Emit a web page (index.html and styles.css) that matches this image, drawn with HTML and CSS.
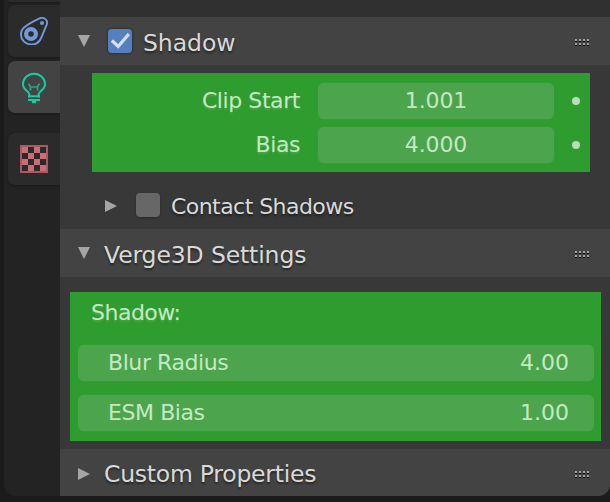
FILE: index.html
```html
<!DOCTYPE html>
<html lang="en">
<head>
<meta charset="utf-8">
<title>Light properties</title>
<link rel="stylesheet" href="styles.css">
</head>
<body>
<svg class="defs" width="0" height="0">
  <symbol id="grip" viewBox="0 0 15 8">
    <path fill="#080808" d="M0 2h2v1H0zM4 2h2v1H4zM8 2h2v1H8zM12 2h2v1h-2zM0 6h2v1H0zM4 6h2v1H4zM8 6h2v1H8zM12 6h2v1h-2z"/>
    <path fill="#a2a2a2" d="M0 0h2v2H0zM4 0h2v2H4zM8 0h2v2H8zM12 0h2v2h-2zM0 4h2v2H0zM4 4h2v2H4zM8 4h2v2H8zM12 4h2v2h-2z"/>
  </symbol>
  <symbol id="down" viewBox="0 0 12 12"><path fill="#a5a5a5" d="M0 0h12L6 12z"/></symbol>
  <symbol id="right" viewBox="0 0 12 12"><path fill="#a5a5a5" d="M0 0l12 6L0 12z"/></symbol>
</svg>
<div class="app">
  <nav class="tabs">
    <div class="tab tab-cut"></div>
    <div class="tab">
      <svg width="28" height="28" viewBox="0 0 28 28" fill="none" stroke="#7199d6">
        <path stroke-width="1.9" d="M2.3 12.6C4.5 9 14 4 19.5 1.4C23.5 -.3 28.4 2.5 26.8 7.4L20.9 21.5C18.8 25.8 15.2 27.7 11 27.5C5.3 27.2 .9 22.8 1 17.6C1 15.6 1.5 13.9 2.3 12.6z"/>
        <circle cx="11" cy="17" r="4.9" stroke-width="4.2"/>
        <circle cx="22" cy="6" r="2.1" fill="#7199d6" stroke="none"/>
      </svg>
    </div>
    <div class="tab active">
      <svg width="28" height="32" viewBox="0 0 28 32" fill="none" stroke="#13cf9f" stroke-width="2">
        <path d="M8 25.4H9.4V23.2C9.4 20.6 3 18.6 3 13.4A11 10.7 0 0 1 25 13.4C25 18.6 18.6 20.6 18.6 23.2V25.4H20"/>
        <path d="M8 25.2h12M8 28.9h12M12 31h4"/>
        <path stroke-width="1.7" opacity=".75" d="M8.5 12.6l2 3.3V19.6M19.5 12.6l-2 3.3V19.6M10.5 16h7"/>
      </svg>
    </div>
    <div class="tab texture">
      <svg width="28" height="28" viewBox="0 0 28 28">
        <path fill="#cc6d75" d="M2 2h6v6H2zM14 2h6v6h-6zM8 8h6v6H8zM20 8h6v6h-6zM2 14h6v6H2zM14 14h6v6h-6zM8 20h6v6H8zM20 20h6v6h-6z"/>
        <path fill="none" stroke="#a75a61" stroke-width="2" d="M1 1h26v26H1z"/>
      </svg>
    </div>
  </nav>
  <main class="panels">
    <header class="head">
      <svg class="arrow" width="12" height="12"><use href="#down"/></svg>
      <span class="check on"><svg width="24" height="24" viewBox="0 0 24 24"><path fill="none" stroke="#d5def0" stroke-width="3.2" d="M3.9 11.5l6.3 6L20.8 5"/></svg></span>
      <span class="title shadow-title">Shadow</span>
      <svg class="grip" width="15" height="8"><use href="#grip"/></svg>
    </header>
    <section class="body shadow-body">
      <div class="green props">
        <div class="prop"><span class="label">Clip Start</span><span class="field">1.001</span><i class="dot"></i></div>
        <div class="prop"><span class="label">Bias</span><span class="field">4.000</span><i class="dot"></i></div>
      </div>
      <div class="sub">
        <svg class="arrow" width="12" height="12"><use href="#right"/></svg>
        <span class="check"></span>
        <span class="label">Contact Shadows</span>
      </div>
    </section>
    <header class="head">
      <svg class="arrow" width="12" height="12"><use href="#down"/></svg>
      <span class="title">Verge3D Settings</span>
      <svg class="grip" width="15" height="8"><use href="#grip"/></svg>
    </header>
    <section class="body verge-body">
      <div class="green verge">
        <div class="caption">Shadow:</div>
        <div class="slider"><span class="name">Blur Radius</span><span>4.00</span></div>
        <div class="slider"><span class="name">ESM Bias</span><span>1.00</span></div>
      </div>
    </section>
    <header class="head last">
      <svg class="arrow" width="12" height="12"><use href="#right"/></svg>
      <span class="title custom-title">Custom Properties</span>
      <svg class="grip" width="15" height="8"><use href="#grip"/></svg>
    </header>
  </main>
</div>
</body>
</html>
```
FILE: styles.css
```css
* { box-sizing: border-box; }
body {
  margin: 0;
  background: #1b1b1b;
  font-family: "DejaVu Sans", sans-serif;
  font-size: 22px;
  color: #d9d9d9;
  overflow: hidden;
}
.defs { display: block; }
svg { display: block; flex: none; }
.app { display: flex; width: 610px; height: 502px; padding: 0 0 6px 4px; }
.tabs {
  width: 56px;
  padding-left: 4px;
  background: #232323;
  border-bottom-left-radius: 12px;
}
.tab {
  display: flex;
  align-items: center;
  justify-content: center;
  height: 52px;
  margin-bottom: 4px;
  background: #2b2b2b;
  border-radius: 7px 0 0 7px;
  box-shadow: 0 1px 2px #191919;
}
.tab-cut { height: 2px; margin-bottom: 3px; border-radius: 0 0 0 7px; }
.tab.active { background: #434343; }
.texture { margin-top: 20px; }
.panels {
  width: 550px;
  padding-top: 17px;
  background: #303030;
  border-bottom-right-radius: 12px;
  overflow: hidden;
}
.head {
  display: flex;
  align-items: center;
  height: 48px;
  padding: 0 20px 0 18px;
  background: #434343;
}
.head.last { height: 47px; }
.head.last .arrow { margin-top: 2px; }
.grip { margin: 4px 0 0 auto; }
.title {
  margin-left: 14px;
  padding-top: 3px;
  font-size: 23.5px;
  line-height: 28px;
  letter-spacing: -.12px;
  text-shadow: 0 2px 2px rgba(10, 10, 10, .5);
}
.shadow-title { margin-left: 11px; letter-spacing: -.05px; }
.custom-title { letter-spacing: -.24px; }
.check {
  width: 24px;
  height: 24px;
  border-radius: 4px;
  background: #676767;
  box-shadow: 0 1px 2px #292929;
}
.check.on { margin-left: 18px; background: #5680bd; box-shadow: 0 0 2px 1px #333; }
.body { background: #383838; }
.shadow-body { height: 164px; padding: 8px 20px 0 32px; }
.green { background: #2e9c2e; color: #c5e8c4; }
.props { height: 99px; padding-top: 10px; }
.prop { display: flex; align-items: center; height: 36px; margin-bottom: 8px; }
.prop .label {
  width: 208px;
  margin-right: 18px;
  line-height: 26px;
  text-align: right;
}
.label, .name, .caption { letter-spacing: -.42px; }
.prop .label, .caption { text-shadow: 0 2px 2px rgba(120, 185, 120, .4); }
.field {
  width: 236px;
  height: 36px;
  border-radius: 6px;
  background: #4ca54c;
  box-shadow: 0 0 2px #43a343;
  line-height: 35px;
  letter-spacing: -.1px;
  text-align: center;
}
.dot { width: 8px; height: 8px; margin-left: 18px; border-radius: 50%; background: #b7dfb6; }
.sub { display: flex; align-items: center; height: 24px; margin-top: 21px; padding-left: 13px; }
.sub .arrow { margin-top: 1px; }
.sub .check { margin: 0 11px 0 19px; }
.sub .label { padding-top: 2px; letter-spacing: -.55px; text-shadow: 0 2px 2px rgba(10, 10, 10, .5); }
.verge-body { height: 172px; padding: 15px 9px 0 10px; }
.verge { height: 149px; padding: 0 7px 0 8px; }
.caption { height: 53px; padding: 7px 0 0 13px; line-height: 28px; letter-spacing: -.5px; }
.slider {
  display: flex;
  justify-content: space-between;
  height: 36px;
  margin-bottom: 14px;
  padding: 0 25px 0 30px;
  border-radius: 6px;
  background: #4ca54c;
  box-shadow: 0 0 2px #43a343;
  line-height: 35px;
}
```
